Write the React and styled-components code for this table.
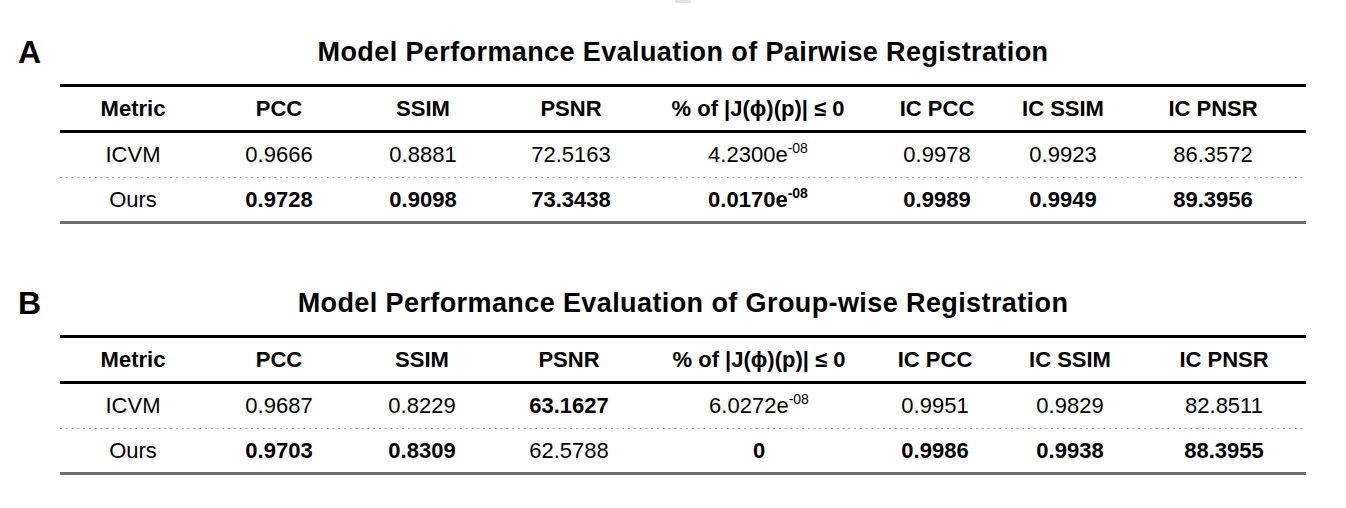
import React from 'react'
import styled, { createGlobalStyle } from 'styled-components'

const GlobalStyle = createGlobalStyle`
  html, body {
    margin: 0;
    padding: 0;
    background: #fff;
  }
  body {
    font-family: "Liberation Sans", Arial, Helvetica, sans-serif;
    color: #000;
  }
`

const HEADERS = ['Metric', 'PCC', 'SSIM', 'PSNR', '% of |J(ϕ)(p)| ≤ 0', 'IC PCC', 'IC SSIM', 'IC PNSR']

const TABLES = [
  {
    label: 'A',
    title: 'Model Performance Evaluation of Pairwise Registration',
    cols: '146px 146px 142px 154px 220px 138px 114px 186px',
    rows: [
      [
        { v: 'ICVM' },
        { v: '0.9666' },
        { v: '0.8881' },
        { v: '72.5163' },
        { v: '4.2300e', exp: '-08' },
        { v: '0.9978' },
        { v: '0.9923' },
        { v: '86.3572' },
      ],
      [
        { v: 'Ours' },
        { v: '0.9728', b: true },
        { v: '0.9098', b: true },
        { v: '73.3438', b: true },
        { v: '0.0170e', exp: '-08', b: true },
        { v: '0.9989', b: true },
        { v: '0.9949', b: true },
        { v: '89.3956', b: true },
      ],
    ],
  },
  {
    label: 'B',
    title: 'Model Performance Evaluation of Group-wise Registration',
    cols: '146px 146px 140px 154px 226px 126px 144px 164px',
    rows: [
      [
        { v: 'ICVM' },
        { v: '0.9687' },
        { v: '0.8229' },
        { v: '63.1627', b: true },
        { v: '6.0272e', exp: '-08' },
        { v: '0.9951' },
        { v: '0.9829' },
        { v: '82.8511' },
      ],
      [
        { v: 'Ours' },
        { v: '0.9703', b: true },
        { v: '0.8309', b: true },
        { v: '62.5788' },
        { v: '0', b: true },
        { v: '0.9986', b: true },
        { v: '0.9938', b: true },
        { v: '88.3955', b: true },
      ],
    ],
  },
]

const App = () => {
  return (
    <>
      <GlobalStyle />
      <Page>
        <TopStrip>
          <Tab />
        </TopStrip>
        {TABLES.map((t, i) => (
          <Section key={t.label} $gap={i === 0 ? 34 : 64}>
            <Label>{t.label}</Label>
            <Title>{t.title}</Title>
            <Table>
              <HeadRow $cols={t.cols}>
                {HEADERS.map((h) => (
                  <Cell key={h} $bold>
                    {h}
                  </Cell>
                ))}
              </HeadRow>
              {t.rows.map((row, ri) => (
                <BodyRow key={ri} $cols={t.cols} $last={ri === t.rows.length - 1}>
                  {row.map((c, ci) => (
                    <Cell key={ci} $bold={c.b}>
                      {c.v}
                      {c.exp && <Exp>{c.exp}</Exp>}
                    </Cell>
                  ))}
                </BodyRow>
              ))}
            </Table>
          </Section>
        ))}
      </Page>
    </>
  )
}

const Page = styled.main`
  width: 1346px;
  min-height: 508px;
  display: flex;
  flex-direction: column;
`

const TopStrip = styled.div`
  display: grid;
  grid-template-columns: 60px 1246px;
`

const Tab = styled.div`
  grid-column: 2;
  justify-self: center;
  width: 16px;
  height: 3px;
  background: #e3e3e3;
`

const Section = styled.section`
  display: grid;
  grid-template-columns: 60px 1246px;
  margin-top: ${(p) => p.$gap}px;
`

const Label = styled.div`
  grid-column: 1;
  grid-row: 1;
  align-self: end;
  padding-left: 18px;
  font-size: 32px;
  line-height: 30px;
  font-weight: 700;
`

const Title = styled.h2`
  grid-column: 2;
  grid-row: 1;
  margin: 0;
  text-align: center;
  font-size: 27px;
  line-height: 30px;
  font-weight: 700;
  letter-spacing: 0.4px;
`

const Table = styled.div`
  grid-column: 2;
  grid-row: 2;
  margin-top: 17px;
`

const HeadRow = styled.div`
  display: grid;
  grid-template-columns: ${(p) => p.$cols};
  padding: 10px 0 9px;
  border-top: 3px solid #000;
  border-bottom: 3px solid #000;
`

const BodyRow = styled.div`
  display: grid;
  grid-template-columns: ${(p) => p.$cols};
  padding: ${(p) => (p.$last ? '10px 0 9px' : '10px 0 11px')};
  border-bottom: ${(p) => (p.$last ? '3px solid #6e6e6e' : 'none')};
  background-image: ${(p) =>
    p.$last ? 'none' : 'linear-gradient(90deg, #9c9c9c 0 1.5px, transparent 1.5px)'};
  background-size: 5.8px 1px;
  background-repeat: repeat-x;
  background-position: left bottom;
`

const Cell = styled.div`
  text-align: center;
  white-space: nowrap;
  font-size: 22px;
  line-height: 24px;
  font-weight: ${(p) => (p.$bold ? 700 : 400)};
`

const Exp = styled.sup`
  font-size: 14px;
  line-height: 0;
  vertical-align: 0.65em;
`

export default App
